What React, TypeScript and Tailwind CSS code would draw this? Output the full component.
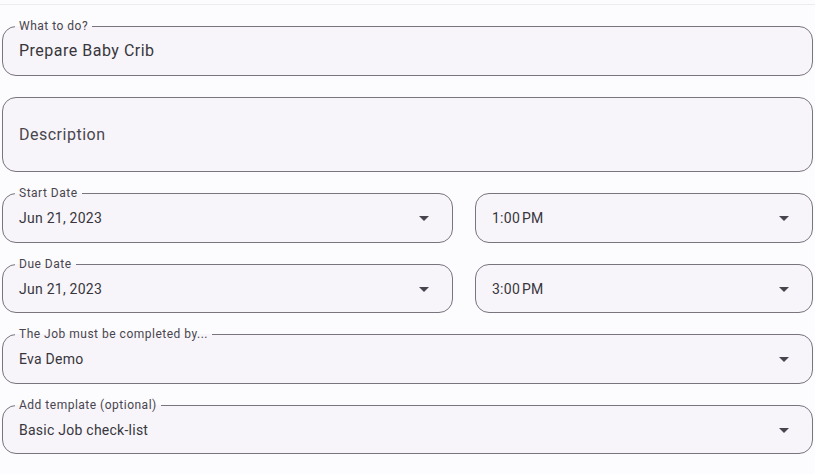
import React from 'react';

// ==================== TYPES ====================

interface OutlinedFieldProps {
  label?: string;
  value: string;
  placeholder?: boolean;
  dropdown?: boolean;
  height: string;
  innerHeight: string;
  className?: string;
}

// ==================== ICONS ====================

const ArrowDropDown = () => (
  <svg viewBox="0 0 24 24" className="h-6 w-6 shrink-0 fill-[#49454f]">
    <path d="M7 10l5 5 5-5z" />
  </svg>
);

// ==================== FIELD ====================

const OutlinedField = ({
  label,
  value,
  placeholder = false,
  dropdown = false,
  height,
  innerHeight,
  className = '',
}: OutlinedFieldProps) => {
  // Les listes déroulantes utilisent un texte plus petit
  const textClass = dropdown
    ? 'text-sm leading-5 tracking-[0.25px]'
    : 'text-base leading-6 tracking-[0.5px]';

  return (
    <fieldset
      className={`${height} ${label ? '-mt-2' : ''} ${className} block min-w-0 rounded-[14px] border border-[#79747e] bg-[#f7f5f9] pl-3 pr-[16px]`}
    >
      {label && (
        <legend className="px-1 text-xs leading-4 tracking-[0.5px] text-[#49454f]">{label}</legend>
      )}
      <div className={`${innerHeight} flex items-center pl-1`}>
        <span
          className={`flex-1 truncate ${textClass} ${placeholder ? 'text-[#49454f]' : 'text-[#38363c]'}`}
        >
          {value}
        </span>
        {dropdown && <ArrowDropDown />}
      </div>
    </fieldset>
  );
};

// ==================== APP ====================

export default function App() {
  return (
    <div
      className="min-h-screen w-full bg-white"
      style={{ fontFamily: 'Roboto, "Noto Sans", Arial, sans-serif' }}
    >
      <div className="w-[815px] bg-[#fcfbfd] pb-5">
        <div className="h-1" />
        <div className="h-px bg-[#ecebee]" />

        <div className="flex flex-col gap-[21px] pl-[2px] pr-[2px] pt-[21px]">
          {/* Titre */}
          <OutlinedField
            label="What to do?"
            value="Prepare Baby Crib"
            height="h-[58px]"
            innerHeight="h-[34px]"
          />

          {/* Description */}
          <OutlinedField value="Description" placeholder height="h-[75px]" innerHeight="h-[73px]" />

          {/* Date de début */}
          <div className="flex gap-[22px] items-end">
            <OutlinedField
              label="Start Date"
              value="Jun 21, 2023"
              dropdown
              height="h-[58px]"
              innerHeight="h-[34px]"
              className="w-[451px]"
            />
            <OutlinedField
              value={'1:00\u202FPM'}
              dropdown
              height="h-[50px]"
              innerHeight="h-[48px]"
              className="flex-1"
            />
          </div>

          {/* Date d'échéance */}
          <div className="flex gap-[22px] items-end">
            <OutlinedField
              label="Due Date"
              value="Jun 21, 2023"
              dropdown
              height="h-[57px]"
              innerHeight="h-[33px]"
              className="w-[451px]"
            />
            <OutlinedField
              value={'3:00\u202FPM'}
              dropdown
              height="h-[49px]"
              innerHeight="h-[47px]"
              className="flex-1"
            />
          </div>

          {/* Responsable */}
          <OutlinedField
            label="The Job must be completed by..."
            value="Eva Demo"
            dropdown
            height="h-[58px]"
            innerHeight="h-[34px]"
          />

          {/* Modèle */}
          <OutlinedField
            label="Add template (optional)"
            value="Basic Job check-list"
            dropdown
            height="h-[57px]"
            innerHeight="h-[33px]"
          />
        </div>
      </div>
    </div>
  );
}
